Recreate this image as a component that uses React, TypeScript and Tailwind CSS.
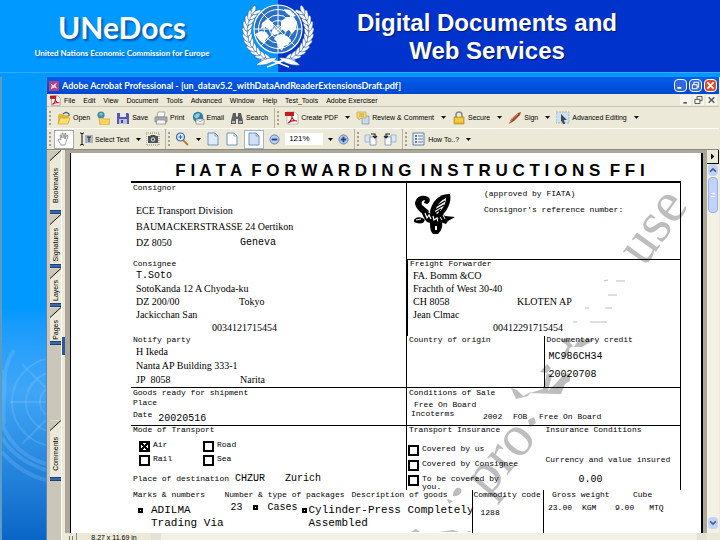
import React from 'react';

const MENU = ['File', 'Edit', 'View', 'Document', 'Tools', 'Advanced', 'Window', 'Help', 'Test_Tools', 'Adobe Exerciser'];

function UnEmblem() {
  const leaves = [0, 1, 2, 3, 4, 5, 6, 7, 8, 9, 10];
  const half = (
    <g>
      <path d="M40 62 C22 60 8 48 6 32 C5 22 8 13 13 7" fill="none" stroke="#fff" strokeWidth="1.2" />
      {leaves.map((i) => {
        const a = ((112 + i * 11) * Math.PI) / 180;
        const deg = 112 + i * 11;
        return (
          <g key={i} fill="#fff" stroke="#1b4f9c" strokeWidth="0.5">
            <ellipse cx={37 + Math.cos(a) * 33} cy={31 + Math.sin(a) * 31} rx="5" ry="1.9" transform={`rotate(${deg + 65} ${37 + Math.cos(a) * 33} ${31 + Math.sin(a) * 31})`} />
            <ellipse cx={37 + Math.cos(a) * 28.5} cy={31 + Math.sin(a) * 28} rx="4.4" ry="1.7" transform={`rotate(${deg + 112} ${37 + Math.cos(a) * 28.5} ${31 + Math.sin(a) * 28})`} />
          </g>
        );
      })}
      <path d="M36 58 C28 57 20 60 15 65 C24 66 31 63 36 58Z" fill="#fff" stroke="#1b4f9c" strokeWidth="0.5" />
      <path d="M30 60 L48 67" stroke="#fff" strokeWidth="1.6" />
    </g>
  );
  return (
    <svg viewBox="0 0 74 70" className="h-[70px] w-[74px]" aria-label="United Nations emblem">
      {half}
      <g transform="translate(74 0) scale(-1 1)">{half}</g>
      <circle cx="37" cy="29" r="24" fill="#2a70c4" stroke="#fff" strokeWidth="1.2" />
      <g fill="none" stroke="#fff" strokeWidth="1">
        <circle cx="37" cy="29" r="19.5" />
        <circle cx="37" cy="29" r="14" />
        <circle cx="37" cy="29" r="8.5" />
        <circle cx="37" cy="29" r="3.5" />
        <path d="M37 5V53M13 29H61M20 12L54 46M54 12L20 46" />
      </g>
      <g fill="#fff">
        <path d="M14 34l6-3 5 1 3 4-3 3-2 5-4-3-3-4z" />
        <path d="M35 36l5-2 6 2 4 4-3 5-4 1-2 5-4-4-1-5-3-3z" />
        <path d="M40 21l6-4 6 0 4 5-1 7-4 5-3-4-4 2-4-4z" />
        <path d="M43 9l6 1 6 6-4 1-6-4z" />
        <path d="M26 19l5 3 2 5-4 3-5-3-4 2 1-6z" />
        <path d="M32 29l4 1 1 4-4 1-3-2z" />
      </g>
    </svg>
  );
}

function Icon({ children, className = 'h-[14px] w-[14px]' }: { children: React.ReactNode; className?: string }) {
  return (
    <svg viewBox="0 0 14 14" className={`${className} shrink-0`} aria-hidden="true">
      {children}
    </svg>
  );
}

const FolderIcon = () => (
  <Icon>
    <path d="M1 5l1-2h4l1 1h5v8H1z" fill="#e2b93b" />
    <path d="M1 13l2-6h10l-2 6z" fill="#fbdf6e" stroke="#b98d1c" strokeWidth="0.5" />
    <path d="M6 3c2-2 4-2 6 0v2" fill="none" stroke="#40668c" strokeWidth="1.2" />
  </Icon>
);
const WebFolderIcon = () => (
  <Icon>
    <circle cx="5" cy="4" r="3.6" fill="#3f8bb8" />
    <path d="M3 3q2-2 4 0L5 5z" fill="#8fd08a" />
    <path d="M3 7h4l1 1h6l-1 6H4z" fill="#f6d45c" stroke="#b98d1c" strokeWidth="0.5" />
  </Icon>
);
const SaveIcon = () => (
  <Icon>
    <path d="M1 2h11l1 1v10H1z" fill="#5658a8" />
    <path d="M4 2h6v4H4z" fill="#e4e6f5" />
    <path d="M3 8h8v5H3z" fill="#b9bde0" />
    <path d="M5 9h2v3H5z" fill="#44468c" />
  </Icon>
);
const PrintIcon = () => (
  <Icon>
    <path d="M4 1h7l-1 5H3z" fill="#fff" stroke="#777" strokeWidth="0.6" />
    <path d="M1 6h12v5H1z" fill="#a9adb2" stroke="#6c7074" strokeWidth="0.6" />
    <path d="M3 9h8l1 4H2z" fill="#f6f6f6" stroke="#777" strokeWidth="0.6" />
  </Icon>
);
const MailIcon = () => (
  <Icon>
    <circle cx="7" cy="6" r="5.2" fill="#2f7ea9" />
    <path d="M3 5q3-4 6-2L8 6 5 8z" fill="#8ccbd8" />
    <path d="M5 8h8v5H5z" fill="#fff" stroke="#667" strokeWidth="0.6" />
    <path d="M5 8l4 3 4-3" fill="none" stroke="#667" strokeWidth="0.6" />
  </Icon>
);
const BinocularsIcon = () => (
  <Icon>
    <path d="M3 2h3v3l1 1 1-1V2h3l2 8v3H8V8H6v5H1v-3z" fill="#5b5d60" />
    <path d="M2 10h3v2H2zM9 10h3v2H9z" fill="#b6b8ba" />
  </Icon>
);
const PdfIcon = () => (
  <Icon>
    <path d="M2 1h8l3 3v9H2z" fill="#fff" stroke="#999" strokeWidth="0.6" />
    <path d="M0 1h9v4H0z" fill="#c9171e" />
    <path d="M3 12c3-2 4-5 4-7 0 3 2 5 5 5-3-1-6 0-9 2z" fill="none" stroke="#c9171e" strokeWidth="1.1" />
  </Icon>
);
const CommentIcon = () => (
  <Icon>
    <path d="M6 5h7v8H6z" fill="#c7d8ef" stroke="#6b83a6" strokeWidth="0.6" />
    <path d="M1 1h9v6H5L3 9V7H1z" fill="#f5dc7a" stroke="#b99a30" strokeWidth="0.6" />
    <path d="M3 3h5M3 5h5" stroke="#a88a2c" strokeWidth="0.7" />
  </Icon>
);
const LockIcon = () => (
  <Icon>
    <path d="M4 7V4a3 3 0 0 1 6 0v3" fill="none" stroke="#8b8b85" strokeWidth="1.6" />
    <path d="M2 6h10v7H2z" fill="#e8b923" stroke="#a57f0d" strokeWidth="0.6" />
    <path d="M3 8h8M3 10h8" stroke="#fbe289" strokeWidth="0.8" />
  </Icon>
);
const PenIcon = () => (
  <Icon>
    <path d="M1 13l2-5 7-6 3-1-1 3-6 6z" fill="#a34a2a" />
    <path d="M1 13l3-5 6-5" fill="none" stroke="#e09a74" strokeWidth="0.9" />
  </Icon>
);
const SelectIcon = () => (
  <Icon>
    <path d="M0 1h13v11H0z" fill="#cfe0ee" stroke="#7ea0bd" strokeWidth="0.7" strokeDasharray="2 1" />
    <path d="M5 3l6 6H8l1 4-2 0-1-3-1 1z" fill="#3c4650" />
  </Icon>
);
const HandIcon = () => (
  <Icon>
    <path d="M4 13L1 8l1-1 2 1-1-5 1 0 1 3V1h1l1 5 1-5 1 1-1 5 2-4 1 1-2 6-1 3z" fill="#fff" stroke="#777" strokeWidth="0.7" />
  </Icon>
);
const TextSelectIcon = () => (
  <Icon>
    <path d="M1 1h1l1 1 1-1h1M3 2v10M1 13h1l1-1 1 1h1" fill="none" stroke="#111" strokeWidth="1" />
    <path d="M6 3h8v8H6z" fill="#a9b6c4" />
    <path d="M8 5h4M10 5v5" stroke="#222" strokeWidth="1" />
  </Icon>
);
const CameraIcon = () => (
  <Icon>
    <path d="M0 1h13v12H0z" fill="none" stroke="#555" strokeWidth="0.7" strokeDasharray="1 1" />
    <path d="M2 4h2l1-1h4l1 1h2v7H2z" fill="#4c4f52" />
    <circle cx="7" cy="7.5" r="2.2" fill="#c7ccd0" />
    <circle cx="7" cy="7.5" r="1" fill="#333" />
  </Icon>
);
const MagnifierIcon = () => (
  <Icon>
    <path d="M8 8l5 5" stroke="#c17a2c" strokeWidth="2" />
    <circle cx="5.5" cy="5" r="4" fill="#dceafb" stroke="#3667b0" strokeWidth="1.2" />
    <path d="M3.5 5h4M5.5 3v4" stroke="#3667b0" strokeWidth="1" />
  </Icon>
);
const PageIcon = ({ fill = '#fff' }: { fill?: string }) => (
  <Icon>
    <path d="M2 1h7l3 3v9H2z" fill={fill} stroke="#6e93c4" strokeWidth="1" />
    <path d="M9 1v3h3" fill="none" stroke="#6e93c4" strokeWidth="0.8" />
  </Icon>
);
const RoundIcon = ({ plus = false }: { plus?: boolean }) => (
  <Icon className="h-[11px] w-[11px]">
    <circle cx="7" cy="7" r="5.8" fill="#b9cdea" stroke="#5f82b8" strokeWidth="1.2" />
    <path d={plus ? 'M3.500 7h7M7 3.500v7' : 'M3.500 7h7'} stroke="#20468c" strokeWidth="2.4" />
  </Icon>
);
const RotateIcon = ({ flip = false }: { flip?: boolean }) => (
  <Icon>
    <g transform={flip ? 'translate(14 0) scale(-1 1)' : undefined}>
      <path d="M1 3h5v7H1z" fill="#dbe6f4" stroke="#8ca6c9" strokeWidth="0.7" />
      <path d="M6 5h6v8H6z" fill="#fff" stroke="#6e8cb5" strokeWidth="0.8" />
      <path d="M7 2h4v3M9 4l2 2 2-2" fill="none" stroke="#222" strokeWidth="1.2" />
    </g>
  </Icon>
);
const HowToIcon = () => (
  <Icon>
    <path d="M1 1h11v12H1z" fill="#e9f0fa" stroke="#56779f" strokeWidth="0.9" />
    <path d="M3 4h2M3 7h2M3 10h2" stroke="#28549a" strokeWidth="1.6" />
    <path d="M6 4h5M6 7h5M6 10h5" stroke="#6d7f94" strokeWidth="1" />
  </Icon>
);

function Grip() {
  return <span className="h-[14px] w-0 shrink-0 border-l-2 border-dotted border-[#a5a294]" />;
}

function Separator() {
  return <span className="h-[20px] w-px shrink-0 bg-[#b9b5a2]" />;
}

function Caret() {
  return (
    <svg viewBox="0 0 5 3" className="h-[3px] w-[5px] shrink-0" aria-hidden="true">
      <path d="M0 0h5L2.500 3z" fill="#000" />
    </svg>
  );
}

function ToolButton({ icon, label, name, caret }: { icon: React.ReactNode; label?: string; name?: string; caret?: boolean }) {
  return (
    <button type="button" aria-label={name ?? label} className="flex shrink-0 items-center gap-[2px] whitespace-nowrap">
      {icon}
      {label && <span>{label}</span>}
      {caret && <span className="pl-[5px]"><Caret /></span>}
    </button>
  );
}

function TitleBar() {
  return (
    <div className="flex h-[17px] shrink-0 items-center justify-between bg-linear-to-b from-[#0a5fe8] via-[#0052e0] to-[#0048cf] pr-[2px] pl-[2px]">
      <div className="flex items-center gap-[3px]">
        <Icon className="h-[10px] w-[10px]">
          <path d="M0 0h14v14H0z" fill="#b3407f" />
          <path d="M2 3l4 3 5-4-2 5 3 4-5-2-5 3 2-5z" fill="#f7d5e8" />
        </Icon>
        <h2 className="font-['Lato'] text-[9px] leading-[14px] font-bold whitespace-nowrap text-white">
          Adobe Acrobat Professional - [un_datav5.2_withDataAndReaderExtensionsDraft.pdf]
        </h2>
      </div>
      <div className="flex gap-[2px]">
        <button type="button" aria-label="Minimize" className="h-[13px] w-[13px] rounded-sm border border-white bg-[#3166dd]">
          <Icon className="h-[11px] w-[11px]"><path d="M3 10h5" stroke="#fff" strokeWidth="2.4" /></Icon>
        </button>
        <button type="button" aria-label="Restore" className="h-[13px] w-[13px] rounded-sm border border-white bg-[#3166dd]">
          <Icon className="h-[11px] w-[11px]"><path d="M5 6V3h6v6H9M3 6h6v5H3z" fill="none" stroke="#fff" strokeWidth="1.3" /></Icon>
        </button>
        <button type="button" aria-label="Close" className="h-[13px] w-[13px] rounded-sm border border-white bg-[#d8502e]">
          <Icon className="h-[11px] w-[11px]"><path d="M3 3l8 8M11 3l-8 8" stroke="#fff" strokeWidth="2" /></Icon>
        </button>
      </div>
    </div>
  );
}

function MenuBar() {
  return (
    <div className="flex h-[13px] shrink-0 items-center justify-between border-b border-[#c9c5b2] pr-[2px] pl-[3px]">
      <div className="flex items-center">
        <Icon className="mr-[3px] h-[11px] w-[11px]">
          <path d="M2 1h8l3 3v9H2z" fill="#fff" stroke="#a66" strokeWidth="0.8" />
          <path d="M0 1h8v4H0z" fill="#c9171e" />
          <path d="M3 12c3-2 4-5 4-7 0 3 2 5 5 5-3-1-6 0-9 2z" fill="none" stroke="#c9171e" strokeWidth="1.3" />
        </Icon>
        <nav className="flex gap-[8px]">
          {MENU.map((item) => (
            <button key={item} type="button" className="whitespace-nowrap">{item}</button>
          ))}
        </nav>
      </div>
      <div className="flex gap-[2px]">
        <button type="button" aria-label="Minimize document" className="bg-[#f6f5ee]"><Icon className="h-[10px] w-[11px]"><path d="M4 11h5" stroke="#555" strokeWidth="2.2" /></Icon></button>
        <button type="button" aria-label="Restore document" className="bg-[#f6f5ee]"><Icon className="h-[10px] w-[11px]"><path d="M5 6V2h7v6H9M2 6h7v6H2z" fill="none" stroke="#555" strokeWidth="1.4" /></Icon></button>
        <button type="button" aria-label="Close document" className="bg-[#f6f5ee]"><Icon className="h-[10px] w-[11px]"><path d="M3 3l8 8M11 3l-8 8" stroke="#555" strokeWidth="2" /></Icon></button>
      </div>
    </div>
  );
}

function Toolbars() {
  return (
    <>
      <div className="flex h-[21px] shrink-0 items-center gap-[6px] pl-[2px]">
        <Grip />
        <ToolButton icon={<FolderIcon />} label="Open" />
        <ToolButton icon={<WebFolderIcon />} name="Open web page" />
        <ToolButton icon={<SaveIcon />} label="Save" />
        <ToolButton icon={<PrintIcon />} label="Print" />
        <ToolButton icon={<MailIcon />} label="Email" />
        <ToolButton icon={<BinocularsIcon />} label="Search" />
        <div className="flex items-center gap-[2px]"><Separator /><Grip /></div>
        <ToolButton icon={<PdfIcon />} label="Create PDF" caret />
        <ToolButton icon={<CommentIcon />} label="Review & Comment" caret />
        <ToolButton icon={<LockIcon />} label="Secure" caret />
        <ToolButton icon={<PenIcon />} label="Sign" caret />
        <ToolButton icon={<SelectIcon />} label="Advanced Editing" caret />
      </div>
      <div className="flex h-[21px] shrink-0 items-center gap-[5px] border-t border-white pl-[2px]">
        <div className="flex items-center gap-[3px]">
          <Grip />
          <span className="flex h-[19px] w-[20px] items-center justify-center border border-[#aaa] bg-white">
            <ToolButton icon={<HandIcon />} name="Hand tool" />
          </span>
        </div>
        <ToolButton icon={<TextSelectIcon />} label="Select Text" caret />
        <ToolButton icon={<CameraIcon />} name="Snapshot" />
        <div className="flex items-center gap-[2px]"><Separator /><Grip /></div>
        <ToolButton icon={<MagnifierIcon />} name="Zoom in" caret />
        <ToolButton icon={<PageIcon fill="#dfeafa" />} name="Actual size" />
        <ToolButton icon={<PageIcon />} name="Fit page" />
        <span className="flex h-[19px] w-[20px] items-center justify-center border border-[#9db4d4] bg-white">
          <ToolButton icon={<PageIcon fill="#cfe0f7" />} name="Fit width" />
        </span>
        <ToolButton icon={<RoundIcon />} name="Zoom out" />
        <input aria-label="Zoom level" defaultValue="121%" className="h-[12px] w-[38px] shrink-0 bg-white px-1 text-[8px] leading-[12px]" />
        <Caret />
        <ToolButton icon={<RoundIcon plus />} name="Increase zoom" />
        <div className="flex items-center gap-[2px]"><Separator /><Grip /></div>
        <ToolButton icon={<RotateIcon />} name="Rotate clockwise" />
        <ToolButton icon={<RotateIcon flip />} name="Rotate counterclockwise" />
        <div className="flex items-center gap-[2px]"><Separator /><Grip /></div>
        <ToolButton icon={<HowToIcon />} label="How To..?" caret />
      </div>
    </>
  );
}

function SideTab({ label, className }: { label: string; className: string }) {
  return (
    <button type="button" className={`${className} flex w-full shrink-0 flex-col items-center justify-between bg-[#ece9d8]`}>
      <svg viewBox="0 0 12 11" className="h-[11px] w-full shrink-0" aria-hidden="true">
        <path d="M0 0H12L0 11z" fill="#cac7b8" />
        <path d="M0 11L12 0" stroke="#000" strokeWidth="1" />
      </svg>
      <span className="rotate-180 leading-[11px] [writing-mode:vertical-rl]">{label}</span>
      <span className="h-[4px] w-full shrink-0 border-y border-[#1f3f7c] bg-[#3d66ab]" />
    </button>
  );
}

function Mark() {
  return <span className="inline-block h-[5px] w-[5px] shrink-0 border-2 border-black bg-white align-middle" />;
}

function Check({ label, checked = false }: { label: React.ReactNode; checked?: boolean }) {
  return (
    <label className="flex items-start gap-[3px] text-[8px] leading-[8px]">
      <input
        type="checkbox"
        defaultChecked={checked}
        className="h-[11px] w-[11px] shrink-0 appearance-none border-2 border-black bg-white checked:bg-[linear-gradient(45deg,transparent_42%,#000_42%,#000_58%,transparent_58%),linear-gradient(135deg,transparent_42%,#000_42%,#000_58%,transparent_58%)]"
      />
      <span>{label}</span>
    </label>
  );
}

function Label({ children, className = '' }: { children: React.ReactNode; className?: string }) {
  return <div className={`${className} pl-[2px] text-[8px] leading-[8px] whitespace-nowrap`}>{children}</div>;
}

function FiataLogo() {
  return (
    <svg viewBox="0 0 42 42" className="h-[42px] w-[42px] shrink-0" aria-label="FIATA logo">
      <path d="M1 10c1-7 8-9 13-6 3 2 2 6-1 7l-3-1 1-3c-3 0-4 3-3 5l7 6-3 5C7 20 1 15 1 10z" fill="#000" />
      <path d="M16 19c1-9 9-19 20-18 2 8-3 18-11 24l-8-1z" fill="#000" />
      <path d="M21 19c1-6 6-12 11-14 0 6-4 12-9 16z" fill="#fff" />
      <path d="M23 13l8-5M21 17l9-5M21 20l6-4" stroke="#000" strokeWidth="1.3" />
      <path d="M0 27c3-4 8-3 11 0l-2 3c-4 1-7 0-9-1z" fill="#000" />
      <path d="M2 27l5-1" stroke="#fff" strokeWidth="1" />
      <path d="M7 17c6 1 14 6 20 11l-2 5-12-4c-3-3-5-8-6-12z" fill="#000" />
      <path d="M11 20l2 5 2-3 2 4M19 23l1 4 3-2 1 4" stroke="#fff" strokeWidth="1.2" fill="none" />
      <path d="M25 17l6 6 10 1-7 4-2 3-8-3z" fill="#000" />
      <path d="M29 22l2 4M26 24l2 3" stroke="#fff" strokeWidth="1" />
      <path d="M16 29l12-1c1 6-1 10-4 13l-5 0c-3-3-3-8-3-12z" fill="#000" />
      <path d="M21 33h2v4h-2z" fill="#fff" />
    </svg>
  );
}

function Watermark() {
  return (
    <svg viewBox="0 0 631 380" className="pointer-events-none absolute top-0 left-0 h-[380px] w-[631px] fill-[#bdbdbd] font-['Liberation_Serif'] text-[58px]" aria-hidden="true">
      <text transform="translate(417 345) rotate(-50)">pro</text>
      <text transform="translate(573 115) rotate(-54)">use</text>
      <path d="M457 267l6-3 2 6-6 4zM440 235l6 2 6 6 8-4-3 4-12 3zM459 240l13-4 4-16 5 2-4 16 10-10 5-6 7-2 0 8-5 3-4 10-6 0z" />
      <path d="M469 219l7-8 4 4-4 5zM491 203l6-10 2 0-2 10zM488 186l8 0 6 7-3 2zM508 186h17l-14 8-8 0z" />
      <path d="M533 128l4-1M545 128h9M537 142h9M514 155h4M534 155h7M502 169h4M519 169h17" stroke="#bdbdbd" strokeWidth="1" />
      <path d="M382 343c0-7 5-10 8-7 2 4-3 8-8 7zM376 346l6 2-4 3zM340 379l5-3 4 3zM368 379l14-2 6 2zM395 379l4-1 2 1z" />
    </svg>
  );
}

function Form() {
  return (
    <div className="flex flex-col pr-[20px] pl-[60px] font-['Liberation_Mono']">
      <h1 className="border-b-2 border-black pt-[8px] pl-[8px] text-center font-['Liberation_Sans'] text-[17px] leading-[20px] font-bold whitespace-pre">
        F I A T A  F O R W A R D I N G  I N S T R U C T I O N S  F F I
      </h1>
      <div className="flex border-b border-black">
        <div className="flex w-1/2 flex-col">
          <div className="h-[77px] pt-px">
            <Label>Consignor</Label>
            <div className="pt-[11px] pl-[5px] font-['Liberation_Serif'] text-[10px] leading-[16px] whitespace-nowrap">
              <p>ECE Transport Division</p>
              <p>BAUMACKERSTRASSE 24 Oertikon</p>
              <p className="flex"><span className="w-[104px]">DZ 8050</span><span className="font-['Liberation_Mono']">Geneva</span></p>
            </div>
          </div>
          <div className="h-[76px]">
            <Label>Consignee</Label>
            <div className="pt-px pl-[5px] font-['Liberation_Serif'] text-[10px] leading-[13px] whitespace-nowrap">
              <p className="font-['Liberation_Mono']">T.Soto</p>
              <p>SotoKanda 12 A Chyoda-ku</p>
              <p className="flex"><span className="w-[103px]">DZ 200/00</span><span>Tokyo</span></p>
              <p>Jackicchan San</p>
              <p className="pl-[76px]">0034121715454</p>
            </div>
          </div>
          <div className="h-[51px]">
            <Label>Notify party</Label>
            <div className="pt-px pl-[5px] font-['Liberation_Serif'] text-[10px] leading-[14px] whitespace-nowrap">
              <p>H Ikeda</p>
              <p>Nanta AP Building 333-1</p>
              <p className="flex"><span className="w-[104px]">JP&nbsp; 8058</span><span>Narita</span></p>
            </div>
          </div>
        </div>
        <div className="flex w-1/2 flex-col border-x border-black">
          <div className="flex h-[77px] gap-[28px] border-b border-black pt-[10px] pl-[7px]">
            <FiataLogo />
            <div className="-mt-[7px] text-[8px] leading-[16px] whitespace-nowrap">
              <p>(approved by FIATA)</p>
              <p>Consignor's reference number:</p>
            </div>
          </div>
          <div className="h-[76px] border-l border-black">
            <Label>Freight Forwarder</Label>
            <div className="pt-px pl-[5px] font-['Liberation_Serif'] text-[10px] leading-[13px] whitespace-nowrap">
              <p>FA. Bomm &amp;CO</p>
              <p>Frachth of West 30-40</p>
              <p className="flex"><span className="w-[104px]">CH 8058</span><span>KLOTEN AP</span></p>
              <p>Jean Clmac</p>
              <p className="pl-[80px]">00412291715454</p>
            </div>
          </div>
          <div className="flex h-[51px]">
            <div className="w-1/2"><Label>Country of origin</Label></div>
            <div className="w-1/2 border-l border-black">
              <Label>Documentary credit</Label>
              <div className="pt-[4px] pl-[4px] text-[10px] leading-[18px]">
                <p>MC986CH34</p>
                <p>20020708</p>
              </div>
            </div>
          </div>
        </div>
      </div>
      <div className="flex h-[38px] border-b border-black">
        <div className="w-1/2 pt-px">
          <Label>Goods ready for shipment</Label>
          <Label className="pt-[2px]">Place</Label>
          <div className="flex items-end pt-[4px]">
            <Label className="pb-[6px]">Date</Label>
            <span className="pl-[6px] text-[10px] leading-[12px]">20020516</span>
          </div>
        </div>
        <div className="w-1/2 border-x border-black pt-px">
          <Label>Conditions of Sale</Label>
          <p className="pt-[3px] pl-[7px] text-[8px] leading-[9px]">Free On Board</p>
          <div className="flex text-[8px] leading-[9px] whitespace-nowrap">
            <span className="w-[76px] pl-[4px]">Incoterms</span>
            <span className="w-[30px] pt-[3px]">2002</span>
            <span className="w-[26px] pt-[3px]">FOB</span>
            <span className="pt-[3px]">Free On Board</span>
          </div>
        </div>
      </div>
      <div className="flex h-[64px]">
        <div className="w-1/2">
          <Label>Mode of Transport</Label>
          <div className="grid grid-cols-[64px_64px] gap-y-[3px] pt-[7px] pl-[8px]">
            <Check label="Air" checked />
            <Check label="Road" />
            <Check label="Rail" />
            <Check label="Sea" />
          </div>
          <div className="flex items-center pt-[7px]">
            <Label className="w-[104px]">Place of destination</Label>
            <span className="w-[50px] text-[10px] leading-[12px]">CHZUR</span>
            <span className="text-[10px] leading-[12px]">Zurich</span>
          </div>
        </div>
        <div className="flex w-1/2 border-x border-black">
          <div className="w-1/2">
            <Label>Transport Insurance</Label>
            <div className="flex flex-col gap-[4px] pt-[11px] pl-px whitespace-nowrap">
              <Check label="Covered by us" />
              <Check label="Covered by Consignee" />
              <Check label={<>To be covered by<br />you.</>} />
            </div>
          </div>
          <div className="w-1/2">
            <Label>Insurance Conditions</Label>
            <Label className="pt-[22px]">Currency and value insured</Label>
            <p className="pt-[10px] pl-[35px] text-[10px] leading-[12px]">0.00</p>
          </div>
        </div>
      </div>
      <table className="w-full table-fixed border-collapse text-[8px] leading-[9px] whitespace-nowrap">
        <thead>
          <tr className="h-[10px] text-left align-top">
            <th className="w-[17%] pl-[2px] font-normal">Marks &amp; numbers</th>
            <th className="w-[14%] font-normal">Number &amp; type of packages</th>
            <th className="w-[31%] pl-[50px] font-normal">Description of goods</th>
            <th className="w-[13%] border-l border-black pl-px font-normal">Commodity code</th>
            <th className="w-[13%] border-l border-black pl-[8px] font-normal">Gross weight</th>
            <th className="w-[12%] pl-[18px] font-normal">Cube</th>
          </tr>
        </thead>
        <tbody>
          <tr className="h-[31px] align-top">
            <td className="pt-[4px] pl-[7px]">
              <div className="flex gap-[8px] text-[11px] leading-[13px]">
                <span><Mark /></span>
                <span>ADILMA<br />Trading Via</span>
              </div>
            </td>
            <td className="pt-px pl-[6px] text-[10px] leading-[13px]">
              <span className="inline-flex items-center gap-[10px]">23 <Mark /> Cases</span>
            </td>
            <td className="pt-[4px]">
              <div className="flex gap-[2px] text-[11px] leading-[13px]">
                <span><Mark /></span>
                <span>Cylinder-Press Completely<br />Assembled</span>
              </div>
            </td>
            <td className="border-l border-black pt-[8px] pl-[8px]">1288</td>
            <td className="border-l border-black pt-[3px] pl-[4px]"><span className="inline-flex gap-[10px]"><span>23.00</span><span>KGM</span></span></td>
            <td className="pt-[3px]"><span className="inline-flex gap-[15px]"><span>9.00</span><span>MTQ</span></span></td>
          </tr>
          <tr className="align-top">
            <td /><td /><td />
            <td className="border-l border-black" />
            <td className="border-l border-black pl-[39px]">KGM</td>
            <td><span className="inline-flex gap-[10px]"><span>27.00</span><span>MTQ</span></span></td>
          </tr>
        </tbody>
      </table>
    </div>
  );
}

function DocumentPane() {
  return (
    <div className="flex min-h-0 flex-1 border-t border-[#8d8a7c] bg-[#aca899]">
      <aside className="flex w-[15px] shrink-0 flex-col border-r border-white bg-[#cac7b8] pl-[3px]">
        <SideTab label="Bookmarks" className="h-[64px]" />
        <SideTab label="Signatures" className="h-[54px]" />
        <SideTab label="Layers" className="h-[39px]" />
        <SideTab label="Pages" className="h-[38px]" />
        <div className="h-[75px] shrink-0" />
        <SideTab label="Comments" className="h-[61px]" />
      </aside>
      <div className="flex w-[3px] shrink-0 flex-col bg-[#ece9d8] pt-[187px]">
        <span className="h-[18px] bg-[#2f559c]" />
      </div>
      <div className="flex min-w-0 flex-1 flex-col">
        <div className="flex min-h-0 flex-1">
          <div className="mt-[3px] mr-[4px] ml-[5px] min-w-0 flex-1 overflow-hidden border-r-2 border-l border-black bg-white">
            <div className="relative">
              <Watermark />
              <div className="relative"><Form /></div>
            </div>
          </div>
          <div className="flex w-[12px] shrink-0 flex-col items-center bg-[#f3f1e6]">
            <button type="button" aria-label="Expand" className="flex h-[14px] w-full items-center justify-center border-r border-b border-black bg-[#ece9d8]">
              <Icon className="h-[7px] w-[7px]"><path d="M4 1l7 6-7 6z" fill="#000" /></Icon>
            </button>
            <button type="button" aria-label="Scroll up" className="flex h-[12px] w-[10px] items-center justify-center rounded-sm bg-[#c1d3fb]">
              <Icon className="h-[8px] w-[8px]"><path d="M2 10l5-5 5 5" fill="none" stroke="#4d6185" strokeWidth="3" /></Icon>
            </button>
            <div className="mt-px flex h-[36px] w-[10px] shrink-0 items-center justify-center rounded-sm border border-[#98b1e4] bg-[#c1d3fb]">
              <span className="h-[4px] w-[4px] border-y border-white" />
            </div>
            <button type="button" aria-label="Scroll down" className="mt-auto mb-[4px] flex h-[12px] w-[10px] items-center justify-center rounded-sm bg-[#c1d3fb]">
              <Icon className="h-[8px] w-[8px]"><path d="M2 4l5 5 5-5" fill="none" stroke="#4d6185" strokeWidth="3" /></Icon>
            </button>
          </div>
        </div>
        <div className="flex h-[7px] shrink-0 overflow-hidden bg-[#f3f1e6]">
          <span className="flex w-[12px] justify-center gap-[2px] border-r border-[#8d8a7c] bg-[#ece9d8] pt-[3px]">
            <span className="w-px bg-[#777]" /><span className="w-px bg-[#777]" />
          </span>
          <span className="w-[74px] bg-[#ece9d8] text-center leading-[9px] whitespace-nowrap">8.27 x 11.69 in</span>
          <button type="button" aria-label="Scroll left" className="w-[10px] bg-[#e4e2d6]" />
          <span className="flex-1" />
          <button type="button" aria-label="Scroll right" className="w-[10px] bg-[#e4e2d6]" />
          <span className="w-[12px] bg-[#ece9d8]" />
        </div>
      </div>
    </div>
  );
}

function Sidebar() {
  return (
    <div className="relative w-[47px] shrink-0 overflow-hidden border-r border-l-2 border-r-[#5a87b8] border-l-[#5c9cc4] bg-linear-to-b from-[#0099ff] from-50% via-[#3fa6f6] via-68% to-[#0a66c6]">
      <svg viewBox="0 0 44 200" className="absolute bottom-0 left-0 h-[200px] w-[44px]" fill="none" stroke="#a5d8ff" strokeOpacity="0.2" strokeWidth="2" aria-hidden="true">
        <circle cx="54" cy="62" r="16" />
        <circle cx="54" cy="62" r="30" />
        <circle cx="54" cy="62" r="44" />
        <path d="M8 62h36M20 24l24 24M20 104l24-24" />
        <path d="M0 98c8 14 24 26 44 32M0 84c8 20 24 34 44 40M0 112c12 14 28 24 44 28M2 30c2 20-2 30 0 54M12 10C4 22 2 34 2 46" strokeWidth="4" />
      </svg>
    </div>
  );
}

export default function App() {
  return (
    <div className="flex h-screen flex-col overflow-hidden bg-[#0099ff] text-black">
      <header className="flex h-[72px] shrink-0 bg-[#0033cc]">
        <div className="relative w-[278px] shrink-0 bg-[#0099ff] pt-[9px] text-white">
          <div className="w-[244px] text-center font-['Lato'] font-bold [text-shadow:2px_2px_2px_#0058b8]">
            <p className="text-[30px] leading-[36px]">UNeDocs</p>
            <p className="pt-px text-[8px] leading-[14px] whitespace-nowrap">United Nations Economic Commission for Europe</p>
          </div>
          <div className="absolute top-0 -right-[37px]"><UnEmblem /></div>
        </div>
        <h1 className="flex-1 pt-[9px] pr-[24px] text-center font-['Liberation_Sans'] text-[24px] leading-[28px] font-bold text-white [text-shadow:1px_1px_1px_#001a70]">
          Digital Documents and<br />Web Services
        </h1>
      </header>
      <div className="h-[5px] shrink-0 border-t border-[#33aaff] bg-[#0099ff]" />
      <div className="flex min-h-0 flex-1">
        <Sidebar />
        <main className="flex min-w-0 flex-1 flex-col bg-[#ece9d8] pr-px font-['Liberation_Sans'] text-[7px] leading-[9px]">
          <TitleBar />
          <MenuBar />
          <Toolbars />
          <DocumentPane />
        </main>
      </div>
    </div>
  );
}
